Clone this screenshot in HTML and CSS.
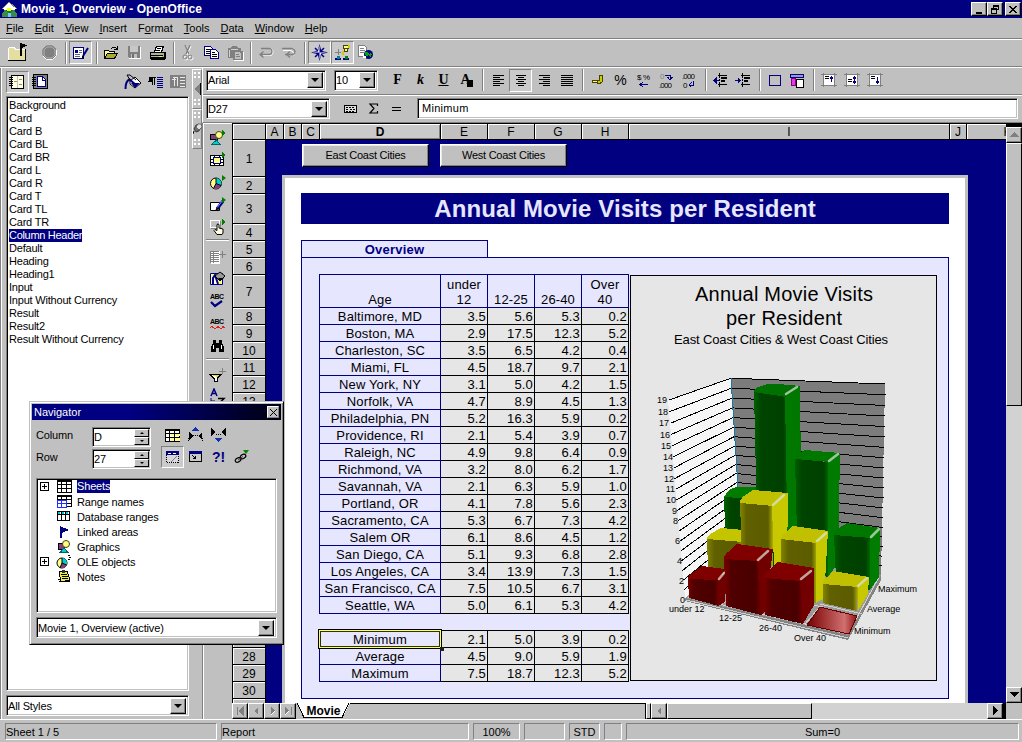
FILE: index.html
```html
<!DOCTYPE html>
<html lang="en">
<head>
<meta charset="utf-8">
<title>Movie 1, Overview - OpenOffice</title>
<link rel="stylesheet" href="styles.css">
</head>
<body>
<div class="app">
  <header class="titlebar">
    <svg class="logo" width="17" height="17" viewBox="0 0 17 17"><path d="M8 1 1 8h2v3h11V8h2z" fill="#fff"/><path d="M3 9h11v3H3z" fill="#008040"/><path d="M1 12l3-3 3 3v4H1zM9 12l3-3 4 4v3H9z" fill="#3a8a4a"/><path d="M6 7h4v3H6z" fill="#ff0"/><path d="M7 12h3v4H7z" fill="#80c0ff"/><path d="M8 1 1 8M8 1l8 7" stroke="#808080" fill="none"/></svg>
    <span class="title-text">Movie 1, Overview - OpenOffice</span>
    <div class="winbtns">
      <b class="wb"><svg width="10" height="9"><path d="M2 7h6v2H2z"/></svg></b>
      <b class="wb"><svg width="10" height="10"><path d="M3.500 1v4M3 1h6M3 2h6M8.500 1v5M7 5.500h2" stroke="#000" fill="none"/><path d="M1 4.500h6M1 5.500h6M1.500 4v5.500M6.500 4v5.500M1 9.500h6" stroke="#000" fill="none"/></svg></b>
      <b class="wb last"><svg width="10" height="9"><path d="M1.500 1l7 7M8.500 1l-7 7" stroke="#000" stroke-width="1.600"/></svg></b>
    </div>
  </header>
  <nav class="menubar">
    <span><u>F</u>ile</span><span><u>E</u>dit</span><span><u>V</u>iew</span><span><u>I</u>nsert</span><span>F<u>o</u>rmat</span><span><u>T</u>ools</span><span><u>D</u>ata</span><span><u>W</u>indow</span><span><u>H</u>elp</span>
  </nav>
  <div class="toolbar main-tools">
    <i class="cell folder"><svg width="22" height="19" viewBox="0 0 22 19"><path d="M2 6l2-2h5l1 2h9v12H2z" fill="#e4dfa0"/><path d="M2.500 17V5.500l1-1h5l1 2h9" stroke="#fff" fill="none"/><path d="M2 17.500h18M19.500 6v12" stroke="#000"/><path d="M14 0h1l6 2.500-5 2.500v8h-2z"/></svg></i>
    <i class="cell"><svg class="smooth" width="17" height="17" viewBox="0 0 17 17"><path d="M5.500 1.500h6l4 4v6l-4 4h-6l-4-4v-6z" fill="#808080" stroke="#fff"/><path d="M5.500 1.500h6l4 4M1.500 11.500v-6l4-4" fill="none" stroke="#909090"/><path d="M6 3h5l3 3v5l-3 3H6l-3-3V6z" fill="#808080" stroke="#b0b0b0"/></svg></i>
    <i class="sep"></i>
    <i class="cell on"><svg width="17" height="14" viewBox="0 0 17 14"><path d="M1.500 1.500h10v11h-10z" fill="#fff" stroke="#000080"/><path d="M3 4h3v3H3z" fill="#000080"/><path d="M7 4.500h3M7 6.500h3M3 8.500h5M3 10.500h5" stroke="#606080"/><path class="smooth" d="M16 2l-5 8" stroke="#000080" stroke-width="2"/><path d="M11 9l-1 3 3-2z"/></svg></i>
    <i class="sep"></i>
    <i class="cell"><svg width="17" height="14" viewBox="0 0 17 14"><path d="M1.500 12V4.500h4l1 1h5v3" fill="#ff9" stroke="#000"/><path d="M1.500 12.500l3-5h10l-3 5z" fill="#aa3" stroke="#000"/><path d="M8 3q3-4 6 0M14.500 0v3.500H11" stroke="#000" fill="none"/></svg></i>
    <i class="cell"><svg width="15" height="15" viewBox="0 0 15 15"><path d="M2 2h12v12H2z" fill="#fff"/><path d="M1 1h12v12H2l-1-1z" fill="#808080"/><path d="M3 1h8v6H3z" fill="#c8c8c8"/><path d="M4 9h6v4H4z" fill="#c0c0c0"/><path d="M5 9h2v4H5z" fill="#707070"/></svg></i>
    <i class="cell"><svg width="18" height="16" viewBox="0 0 18 16"><path d="M5.500 7l2-6h7l-2 6z" fill="#fff" stroke="#000"/><path d="M8 3.500h4M7 5.500h4" stroke="#000"/><path d="M1.500 7.500h14v5h-14z" fill="#b0b0a0" stroke="#000"/><path d="M2 10.500h12M2 14h14M16.500 7v7M1 13h15" stroke="#000"/><path d="M10 11.500h3" stroke="#ff0"/></svg></i>
    <i class="sep"></i>
    <i class="cell"><svg class="smooth" width="13" height="16" viewBox="0 0 13 16"><g fill="none" stroke="#fff" transform="translate(1 1)"><path d="M3 0l4 9M8 0L4 9"/><circle cx="3" cy="12" r="2"/><circle cx="8" cy="12" r="2"/></g><path d="M3 0l4 9M8 0L4 9" stroke="#808080" stroke-width="1.300"/><circle cx="3" cy="12" r="2" fill="none" stroke="#808080"/><circle cx="8" cy="12" r="2" fill="none" stroke="#808080"/></svg></i>
    <i class="cell"><svg width="17" height="15" viewBox="0 0 17 15"><path d="M1.500 1.500h6l2 2v7h-8z" fill="#fff" stroke="#000080"/><path d="M3 4.500h4M3 6.500h4M3 8.500h4" stroke="#000"/><path d="M7.500 4.500h5l3 3v6h-8z" fill="#fff" stroke="#000080"/><path d="M9 7.500h3M9 9.500h5M9 11.500h5" stroke="#000"/></svg></i>
    <i class="cell"><svg width="18" height="16" viewBox="0 0 18 16"><path d="M2 3h3l1-2h5l1 2h3v3h2v9H7v-2H2z" fill="#808080"/><path d="M5 4.500h7M3.500 5v7" stroke="#d0d0d0"/><path d="M8.500 6.500h5l2 2v6h-7z" fill="#c0c0c0" stroke="#808080"/><path d="M10 9.500h3M10 11.500h4" stroke="#808080"/><path d="M17.500 7v8.500H8" stroke="#fff" fill="none"/></svg></i>
    <i class="sep"></i>
    <i class="cell"><svg class="smooth" width="16" height="11" viewBox="0 0 16 11"><path d="M5 8.500h8q2-1 2-3.500t-2-3" stroke="#fff" fill="none"/><path d="M2 7.500h10q2-1 2-3t-2-3H3M5.500 4.500L2 7.500l3.500 3" stroke="#808080" stroke-width="1.300" fill="none"/></svg></i>
    <i class="cell"><svg class="smooth" width="16" height="11" viewBox="0 0 16 11"><path d="M2 3.500h8q3 1 3 5" stroke="#fff" fill="none"/><path d="M1 1.500h10q3 1 3 3t-2 3H4M9 4.500l-3.500 3 3.500 3" stroke="#808080" stroke-width="1.300" fill="none"/></svg></i>
    <i class="sep"></i>
    <i class="cell on"><svg class="smooth" width="17" height="17" viewBox="0 0 17 17"><path d="M4 4l9 9M13 4l-9 9" stroke="#000080" stroke-width="1.500"/><path d="M8.500 0l1.800 6.700L17 8.500l-6.700 1.800L8.500 17l-1.800-6.700L0 8.500l6.700-1.800z" fill="#000080"/><path d="M8.500 1v7.500H1l6-1zM8.500 16V8.500H16l-6 1z" fill="#fff"/></svg></i>
    <i class="cell on"><svg width="17" height="17" viewBox="0 0 17 17"><path d="M9 1h5v3H9zM10 4h3v3h-3z" fill="#ff8" stroke="#440"/><path d="M8 7h2v4H8zM14 1h2v3h-2z" fill="#cc0"/><path d="M4 5v6M1 8h6" stroke="#808080"/><path d="M1 14h6v2H1zM9 14h6v2H9z" fill="#000080"/><path d="M3 12h3v3H3z" fill="#088"/><path d="M11 12h3v3h-3z" fill="#080"/></svg></i>
    <i class="cell"><svg width="17" height="17" viewBox="0 0 17 17"><path d="M1.500 1.500h6l2 2v9h-8z" fill="#fff" stroke="#808080"/><path d="M3 4.500h4M3 6.500h5M3 8.500h4" stroke="#808080"/><circle cx="11.500" cy="10.500" r="4.500" fill="#000080"/><path d="M8 8h3l1 2-2 3-2-2zM13 9l2 1-1 3-2-1z" fill="#0a0"/><path d="M6 12h3v2H6z" fill="#fff"/></svg></i>
  </div>

  <div class="workspace">
    <aside class="stylist">
      <div class="stylist-tools">
        <i class="cell on"><svg width="17" height="16" viewBox="0 0 17 16"><path d="M2.500 1.500h12v13h-12z" fill="#ffffe8" stroke="#000"/><path d="M8.500 2v12" stroke="#c0c0c0"/><path d="M0 3.500h4M0 5.500h4M0 7.500h4M0 9.500h4M0 11.500h4" stroke="#000"/><path d="M5 7h3v1H5zM10 5h3v1h-3zM10 10h3v1h-3z" fill="#a09040"/></svg></i>
        <i class="cell"><svg width="17" height="16" viewBox="0 0 17 16"><path d="M1.500 .5h14v14h-14z" fill="#808080" stroke="#000"/><path d="M0 3.500h4M0 5.500h4M0 7.500h4M0 9.500h4M0 11.500h4" stroke="#000"/><path d="M5.500 2.500h5l3 3v7h-8z" fill="#fff" stroke="#000080"/><path d="M10.500 3v3h3" stroke="#000080" fill="none"/></svg></i>
        <i class="spring"></i>
        <i class="cell"><svg class="smooth" width="18" height="16" viewBox="0 0 18 16"><path d="M6 7l5-4 6 6-6 5-5-4z" fill="#fff" stroke="#000"/><path d="M7 9h9l-5 5z" fill="#000080"/><path d="M1.500 15q0-8 4-9.500L12 11" stroke="#000080" stroke-width="2" fill="none"/><path d="M3 1l3 0 6 5M3 1l3 5" stroke="#000" fill="none"/></svg></i>
        <i class="cell"><svg width="16" height="13" viewBox="0 0 16 13"><path d="M1 1.500h7M1 2h3v3H1zM0 5.500h4M4.500 1v8M6.500 1v8" stroke="#000" fill="#000"/><path d="M9 1.500h6M9 3.500h6M9 5.500h6M9 7.500h6M9 9.500h6M9 11.500h6" stroke="#000080"/></svg></i>
        <i class="cell"><svg width="17" height="14" viewBox="0 0 17 14"><path d="M0 0h16v13H0z" fill="#808080"/><path d="M3 2.500h5M2 4.500h4M4.500 2v9M7.500 2v9M10 2.500h5M10 5.500h5M10 8.500h5M10 11.500h5" stroke="#e8e8e8"/></svg></i>
      </div>
      <div class="stylelist sunken">
        <p>Background</p><p>Card</p><p>Card B</p><p>Card BL</p><p>Card BR</p><p>Card L</p><p>Card R</p><p>Card T</p><p>Card TL</p><p>Card TR</p><p><span class="sel">Column Header</span></p><p>Default</p><p>Heading</p><p>Heading1</p><p>Input</p><p>Input Without Currency</p><p>Result</p><p>Result2</p><p>Result Without Currency</p>
      </div>
      <div class="combo sunken styles-combo"><span>All Styles</span><b class="drop"></b></div>
    </aside>
    <div class="splitter">
      <div class="handle"><i class="dots"></i><svg width="8" height="12"><path d="M7 0v12L1 6z" fill="#808080"/><path d="M7 0v12" stroke="#000"/></svg><i class="dots"></i></div>
      <div class="handle"><i class="dots"></i><svg class="smooth" width="9" height="12" viewBox="0 0 9 12"><path d="M1 8l-1 3" stroke="#000"/><path d="M1 6l2 3 3-1 2-4-2-3-3 1z" fill="#707070" stroke="#000" stroke-width=".6"/><path d="M3 4l2-3h3l1 3-3 3z" fill="#e0e0e0" stroke="#404040" stroke-width=".6"/></svg><i class="dots"></i></div>
    </div>
    <main class="doc">
      <div class="toolbar format-tools">
        <div class="combo sunken font-combo"><span>Arial</span><b class="drop"></b></div>
        <div class="combo sunken size-combo"><span>10</span><b class="drop"></b></div>
        <i class="cell glyph">F</i><i class="cell glyph it">k</i><i class="cell glyph ul">U</i>
        <i class="cell glyph fontcol">A<b></b></i>
        <i class="sep"></i>
        <i class="cell"><svg width="12" height="11"><path d="M1 .5h11M1 2.500h7M1 4.500h11M1 6.500h7M1 8.500h11M1 10.500h7" stroke="#000"/></svg></i>
        <i class="cell on"><svg width="12" height="11"><path d="M1 .5h10M3 2.500h6M1 4.500h10M3 6.500h6M1 8.500h10M3 10.500h6" stroke="#000"/></svg></i>
        <i class="cell"><svg width="12" height="11"><path d="M1 .5h11M5 2.500h7M1 4.500h11M5 6.500h7M1 8.500h11M5 10.500h7" stroke="#000"/></svg></i>
        <i class="cell"><svg width="13" height="11"><path d="M1 .5h12M1 2.500h12M1 4.500h12M1 6.500h12M1 8.500h12M1 10.500h12" stroke="#000"/></svg></i>
        <i class="sep"></i>
        <i class="cell"><svg width="14" height="12" viewBox="0 0 14 12"><path d="M8.500 1.500h3v6l-2 1.500h-3V6.500h2z" fill="#cc0" stroke="#440"/><path d="M1.500 6.500h5v2h-5z" fill="#ff6" stroke="#440"/></svg></i>
        <i class="cell pct">%</i>
        <i class="cell mini"><svg width="16" height="14" viewBox="0 0 16 14"><text x="1" y="7">$</text><text x="7" y="7">%</text><path d="M4 11.500h8M7 9l-3 2.500L7 14" stroke="#000080" fill="none"/></svg></i>
        <i class="cell mini"><svg width="18" height="15" viewBox="0 0 18 15"><text x="2" y="6" fill="#808080">0</text><text x="1" y="15" textLength="13">.000</text><path d="M7 2.500h5v4M9.500 4l2.500 3 2.500-3" stroke="#000080" fill="none"/></svg></i>
        <i class="cell mini"><svg width="18" height="15" viewBox="0 0 18 15"><text x="1" y="6" textLength="13">.000</text><text x="2" y="15">0</text><path d="M12.500 8v4H8M10.500 9.500L8 12l2.500 2.500" stroke="#000080" fill="none"/></svg></i>
        <i class="sep"></i>
        <i class="cell"><svg width="17" height="15" viewBox="0 0 17 15"><path d="M7.500 0v15" stroke="#000" stroke-dasharray="2 1"/><path d="M6 2.500h9M9 5h6M9 8h4M6 11.500h9" stroke="#000" stroke-width="1.500"/><path d="M1 7.500h6M4 5L1.500 7.500 4 10z" fill="#000080" stroke="#000080"/></svg></i>
        <i class="cell"><svg width="17" height="15" viewBox="0 0 17 15"><path d="M7.500 0v15" stroke="#000" stroke-dasharray="2 1"/><path d="M6 2.500h9M9 5h6M9 8h4M6 11.500h9" stroke="#000" stroke-width="1.500"/><path d="M0 7.500h6M3 5l2.500 2.500L3 10z" fill="#000080" stroke="#000080"/></svg></i>
        <i class="sep"></i>
        <i class="cell"><svg width="14" height="13"><path d="M1.500 1.500h11v10h-11z" fill="none" stroke="#000080" stroke-width="1.200"/></svg></i>
        <i class="cell"><svg width="15" height="15" viewBox="0 0 15 15"><path d="M.5 1.500h13v3H.5z" fill="#99c" stroke="#000080"/><path d="M1 5h4v7H1z" fill="#e040e0" stroke="#808"/><path d="M6.500 6.500h7v8h-7z" fill="#fff" stroke="#000"/></svg></i>
        <i class="sep"></i>
        <i class="cell"><svg width="16" height="14" viewBox="0 0 16 14"><path d="M2 1h12v12H2z" fill="#fff"/><path d="M2.500 0v14M13.500 0v14M0 1.500h16M0 12.500h16" stroke="#808080"/><path d="M4 3.500h4M4 5.500h4" stroke="#000"/><path d="M10.500 3v6M9 5.500l1.500-2 1.500 2" stroke="#000080" fill="none"/></svg></i>
        <i class="cell"><svg width="16" height="14" viewBox="0 0 16 14"><path d="M2 1h12v12H2z" fill="#fff"/><path d="M2.500 0v14M13.500 0v14M0 1.500h16M0 12.500h16" stroke="#808080"/><path d="M4 6.500h4M4 8.500h4" stroke="#000"/><path d="M10.500 3v8M9 5.500l1.500-2 1.500 2M9 8.500l1.500 2 1.500-2" stroke="#000080" fill="none"/></svg></i>
        <i class="cell"><svg width="16" height="14" viewBox="0 0 16 14"><path d="M2 1h12v12H2z" fill="#fff"/><path d="M2.500 0v14M13.500 0v14M0 1.500h16M0 12.500h16" stroke="#808080"/><path d="M4 3.500h4M4 5.500h4" stroke="#000"/><path d="M10.500 4v7M9 8.500l1.500 2 1.500-2" stroke="#000080" fill="none"/></svg></i>
      </div>
      <div class="formula-bar">
        <div class="combo sunken name-combo"><span>D27</span><b class="drop"></b></div>
        <i class="cell"><svg width="15" height="10"><path d="M1.500 1.500h12v7h-12z" fill="#ddd" stroke="#000" stroke-width="1.500"/><path d="M3 3.500h9M3 5.500h3M7 5.500h2M10 5.500h2M3 7.500h9" stroke="#000" stroke-dasharray="2 1"/></svg></i>
        <i class="cell"><svg class="smooth" width="11" height="11"><path d="M9.500 3V1H2l4 4.500L2 10h7.500V8" fill="none" stroke="#000" stroke-width="1.200"/></svg></i>
        <i class="cell"><svg width="10" height="6"><path d="M0 1.500h9M0 4.500h9" stroke="#000"/></svg></i>
        <div class="formula-input sunken">Minimum</div>
      </div>
      <div class="editor">
        <div class="toolbox">
          <i><svg width="18" height="16" viewBox="0 0 18 16"><path d="M1.500 4.500h7v5h-7z" fill="#804080" stroke="#000"/><circle cx="10" cy="5" r="3.500" fill="#ff8" stroke="#440"/><path d="M7.500 10l4 4.500h-9z" fill="#0cc" stroke="#066"/><path d="M13 0l4 3-4 3z" fill="#008000"/></svg></i>
          <i><svg width="18" height="16" viewBox="0 0 18 16"><path d="M1.500 3.500h13v10h-13z" fill="#fff" stroke="#000"/><path d="M1 7.500h14M1 10.500h14M5.500 3v11M10.500 3v11" stroke="#000"/><path d="M4.500 5.500h7v6h-7z" fill="#ff8" stroke="#000080"/><path d="M13 0l4 3-4 3z" fill="#008000"/></svg></i>
          <i><svg class="smooth" width="18" height="16" viewBox="0 0 18 16"><circle cx="7" cy="8.500" r="5.500" fill="#ff8" stroke="#000"/><path d="M7 8.500V3a5.500 5.500 0 0 1 5 7.500z" fill="#0cc"/><path d="M7 8.500l5 2a5.500 5.500 0 0 1-7.500 3z" fill="#804080"/><path d="M7 3v5.500l5 2M7 8.500l-2.500 5" stroke="#000" fill="none"/><path d="M13 0l4 3-4 3z" fill="#008000"/></svg></i>
          <i><svg class="smooth" width="18" height="16" viewBox="0 0 18 16"><path d="M1.500 5.500h9v8h-9z" fill="#fff" stroke="#000"/><path d="M14 4L8 12" stroke="#000080" stroke-width="3"/><path d="M13 4l-5 7" stroke="#88f"/><path d="M8 10l-2 4 4-2z"/><path d="M13 0l4 3-4 3z" fill="#008000"/></svg></i>
          <i><svg width="18" height="17" viewBox="0 0 18 17"><path d="M1.500 1.500h9v7h-9z" fill="#c0c0c0" stroke="#fff"/><path d="M2 9.500h9V2" stroke="#808080" fill="none"/><path class="smooth" d="M8 15.500l-3-4 1-1 2 1V5.500q1-1 2 0V9l4 1v4l-1 1.500z" fill="#ffffe0" stroke="#000"/><path d="M13 0l4 3-4 3z" fill="#008000"/></svg></i>
          <hr>
          <i><svg width="18" height="16" viewBox="0 0 18 16"><path d="M2 2h9v13H2z" fill="#fff"/><path d="M1 2.500h9M1 4.500h9M1 6.500h9M1 8.500h9M1 10.500h9M1 12.500h9M1.500 2v12M4.500 2v12" stroke="#808080"/><path d="M13.500 2v7M10 5.500h7" stroke="#808080"/></svg></i>
          <i><svg class="smooth" width="18" height="16" viewBox="0 0 18 16"><path d="M1.500 2.500h12v11h-12z" fill="#ff8" stroke="#000080"/><path d="M4 13V7l2-3 3 9" stroke="#000080" stroke-width="2" fill="#fff"/><path d="M6 5l5-4 5 4-5 5z" fill="#999" stroke="#000"/><path d="M9 7h6l-4 3z"/></svg></i>
          <i class="abc"><svg class="smooth" width="18" height="16" viewBox="0 0 18 16"><text x="1" y="6" textLength="14">ABC</text><path d="M2 9l4 4 7-5" stroke="#000080" stroke-width="2.200" fill="none"/></svg></i>
          <i class="abc"><svg width="18" height="14" viewBox="0 0 18 14"><text x="1" y="7" textLength="14">ABC</text><path d="M1 11l2-1.500L6 12l3-2.500L12 12l2-2.500 2 1.500" stroke="#e02020" fill="none"/></svg></i>
          <i><svg width="16" height="14" viewBox="0 0 16 14"><path d="M3 1h3v3h3V1h3v3l2 4v5H9V9H6v4H1V8l2-4z"/><path d="M3.500 6v4M11.500 6v4" stroke="#fff"/></svg></i>
          <hr>
          <i><svg width="18" height="15" viewBox="0 0 18 15"><path d="M1 6.500h11l-4 4v3H5v-3z" fill="#fff" stroke="#000"/><path d="M3 7h7l-2 2z" fill="#dd4"/><path d="M13.500 0v6M10 3.500h7" stroke="#808080"/></svg></i>
          <i><svg class="smooth" width="18" height="18" viewBox="0 0 18 18"><path d="M2 8l3-7 3 7M3 5.500h4" stroke="#000080" stroke-width="1.500" fill="none"/><path d="M9 10.500h6l-5 5h6" stroke="#000" fill="none" stroke-width="1.500"/><path d="M2 10v3h4" stroke="#000080" fill="none"/></svg></i>
        </div>
        <div class="sheet">
          <div class="colheads"><b class="c0"></b><b class="cA">A</b><b class="cB">B</b><b class="cB">C</b><b class="cD">D</b><b class="cN">E</b><b class="cN">F</b><b class="cN">G</b><b class="cN">H</b><b class="cI">I</b><b class="cJ">J</b><b class="cK">K</b></div>
          <div class="sheetbody">
            <div class="rowheads"><b class="r1">1</b><b>2</b><b class="r3">3</b><b>4</b><b>5</b><b>6</b><b class="r7">7</b><b>8</b><b>9</b><b>10</b><b>11</b><b>12</b><b>13</b><b>14</b><b>15</b><b>16</b><b>17</b><b>18</b><b>19</b><b>20</b><b>21</b><b>22</b><b>23</b><b>24</b><b>25</b><b>26</b><b>27</b><b>28</b><b>29</b><b>30</b><b></b></div>
            <div class="canvas">
              <div class="citybtns"><button>East Coast Cities</button><button>West Coast Cities</button></div>
              <section class="page">
                <h1>Annual Movie Visits per Resident</h1>
                <h2>Overview</h2>
                <div class="card">
                  <div class="tables">
                    <div class="grid">
                      <b class="h">Age</b><b class="h">under<br>12</b><b class="h">12-25</b><b class="h">26-40</b><b class="h">Over<br>40</b>
                      <b>Baltimore, MD</b><i>3.5</i><i>5.6</i><i>5.3</i><i>0.2</i>
                      <b>Boston, MA</b><i>2.9</i><i>17.5</i><i>12.3</i><i>5.2</i>
                      <b>Charleston, SC</b><i>3.5</i><i>6.5</i><i>4.2</i><i>0.4</i>
                      <b>Miami, FL</b><i>4.5</i><i>18.7</i><i>9.7</i><i>2.1</i>
                      <b>New York, NY</b><i>3.1</i><i>5.0</i><i>4.2</i><i>1.5</i>
                      <b>Norfolk, VA</b><i>4.7</i><i>8.9</i><i>4.5</i><i>1.3</i>
                      <b>Philadelphia, PN</b><i>5.2</i><i>16.3</i><i>5.9</i><i>0.2</i>
                      <b>Providence, RI</b><i>2.1</i><i>5.4</i><i>3.9</i><i>0.7</i>
                      <b>Raleigh, NC</b><i>4.9</i><i>9.8</i><i>6.4</i><i>0.9</i>
                      <b>Richmond, VA</b><i>3.2</i><i>8.0</i><i>6.2</i><i>1.7</i>
                      <b>Savannah, VA</b><i>2.1</i><i>6.3</i><i>5.9</i><i>1.0</i>
                      <b>Portland, OR</b><i>4.1</i><i>7.8</i><i>5.6</i><i>2.3</i>
                      <b>Sacramento, CA</b><i>5.3</i><i>6.7</i><i>7.3</i><i>4.2</i>
                      <b>Salem OR</b><i>6.1</i><i>8.6</i><i>4.5</i><i>1.2</i>
                      <b>San Diego, CA</b><i>5.1</i><i>9.3</i><i>6.8</i><i>2.8</i>
                      <b>Los Angeles, CA</b><i>3.4</i><i>13.9</i><i>7.3</i><i>1.5</i>
                      <b>San Francisco, CA</b><i>7.5</i><i>10.5</i><i>6.7</i><i>3.1</i>
                      <b>Seattle, WA</b><i>5.0</i><i>6.1</i><i>5.3</i><i>4.2</i>
                    </div>
                    <div class="grid summary">
                      <b>Minimum<span class="cursor"></span></b><i>2.1</i><i>5.0</i><i>3.9</i><i>0.2</i>
                      <b>Average</b><i>4.5</i><i>9.0</i><i>5.9</i><i>1.9</i>
                      <b>Maximum</b><i>7.5</i><i>18.7</i><i>12.3</i><i>5.2</i>
                    </div>
                  </div>
                  <div class="chart">
                    <svg width="305" height="404" viewBox="631 276 305 404">
                      <defs>
                        <linearGradient id="flat" x1="0" y1="0" x2="1" y2="0"><stop offset="0" stop-color="#700"/><stop offset=".75" stop-color="#d07070"/><stop offset="1" stop-color="#901010"/></linearGradient>
                        <linearGradient id="gf" x1="0" y1="0" x2="1" y2="0"><stop offset="0" stop-color="#006000"/><stop offset=".2" stop-color="#004400"/><stop offset=".85" stop-color="#004000"/><stop offset="1" stop-color="#007000"/></linearGradient>
                        <linearGradient id="yf" x1="0" y1="0" x2="1" y2="0"><stop offset="0" stop-color="#848400"/><stop offset=".2" stop-color="#606000"/><stop offset=".85" stop-color="#5c5c00"/><stop offset="1" stop-color="#b0b000"/></linearGradient>
                        <linearGradient id="rf" x1="0" y1="0" x2="1" y2="0"><stop offset="0" stop-color="#780000"/><stop offset=".2" stop-color="#500000"/><stop offset=".85" stop-color="#4a0000"/><stop offset="1" stop-color="#700000"/></linearGradient>
                      </defs>
                      <text class="ct" x="695" y="301" textLength="178">Annual Movie Visits</text>
                      <text class="ct" x="726" y="325" textLength="116">per Resident</text>
                      <text class="cs" x="674" y="344" textLength="214">East Coast Cities &amp; West Coast Cities</text>
                      <path d="M668 400L731 378 742 550 685 598z" fill="#f6f6f6"/>
                      <path d="M731 378l154 6-4 191-139-25z" fill="#7c7c7c"/>
                      <g class="gridlines">
                        <path d="M669 400L731 378.200 885 384"/><path d="M669.500 411.700L731.500 388.200 886 394.800"/><path d="M670.500 423.200L732 398.100 885 405.500"/><path d="M671 434.500L732.500 407.900 885 416"/><path d="M672 445.800L733 417.600 885 426.600"/><path d="M673 456.900L733.600 427.200 884.500 437"/><path d="M674 467.900L734 436.700 884.500 447.400"/><path d="M674.500 478.700L734.600 446.100 884 457.700"/><path d="M675.500 489.400L735 455.300 884 467.900"/><path d="M676.500 500L735.700 464.500 884 478"/><path d="M677 510.500L736 473.500 883.500 488"/><path d="M678 520.800L736.800 482.500 883.500 498"/><path d="M679 531.100L737 491.300 883 507.900"/><path d="M680 541.100L738 500 883 517.700"/><path d="M680.600 551.100L738.400 508.600 883 527.500"/><path d="M681.500 560.900L739 517.100 882.500 537.100"/><path d="M682.400 570.600L739.400 525.500 882.500 546.700"/><path d="M683.300 580.200L740 533.800 882 556.200"/><path d="M684 589.700L740.500 541.900 882 565.700"/>
                      </g>
                      <path d="M731 378l11 172" stroke="#1878a0"/>
                      <path d="M685 598L742 550l139 25-33 62z" fill="#9a9a9a"/>
                      <path d="M685 598l163 37 33-60v5l-33 60-163-39z" fill="#848484"/>
                      <path d="M686 600l162 38M688 597l160 37 31-57M724 603l11-10M762 614l10-9M805 624l14-16M820 604l42 10M781 598l42 9" stroke="#d0d0d0" fill="none"/>
                      <g>
                        <path d="M724 497l5-7 7-3h21v75l-31-5z" fill="url(#gf)"/><path d="M724 497l5-7 7-3h21v12z" fill="#007c00"/>
                        <path d="M754 392l32 2 3 176-31-8z" fill="url(#gf)"/><path d="M785 394l15-8 1 90-1 94-12-2z" fill="#007800"/><path d="M753.500 392q1-4 5-5l9-3q16 0 33 2l-7 6-7 5z" fill="#007000"/><path class="shine" d="M786 394l11-7"/>
                        <path d="M795 459l34 3-1 115-30-8z" fill="url(#gf)"/><path d="M828 461l12-8-2 110-10 14z" fill="#007a00"/><path d="M795 459q1-4 4-6l6-3 35 3-10 9z" fill="#007800"/><path class="shine" d="M829 461l9-7"/>
                        <path d="M834 535l37 3-1 52-34-11z" fill="url(#gf)"/><path d="M870 537l10-9-1 49-9 13z" fill="#007c00"/><path d="M834 535q1-5 5-7l8-5 33 5-9 10z" fill="#007800"/><path class="shine" d="M871 537l8-8"/>
                      </g>
                      <g>
                        <path d="M707 539l36 2v35l-35-6z" fill="url(#yf)"/><path d="M707 539q0-3 5-6l9-5 22 2v12z" fill="#c4c400"/>
                        <path d="M740 503l33 3v60l-31-6z" fill="url(#yf)"/><path d="M772 505l16-12-1 70-13 4z" fill="#c8c800"/><path d="M740 503q0-4 4-7l9-6 35 3-14 13z" fill="#c0c000"/><path class="shine" d="M773 505l11-10"/>
                        <path d="M781 539l36 3-1 61-34-8z" fill="url(#yf)"/><path d="M816 542l12-11-4 67-8 5z" fill="#c8c800"/><path d="M781 539q0-4 4-6l8-7 35 5-12 12z" fill="#c0c000"/><path class="shine" d="M817 541l9-8"/>
                        <path d="M823 584l35 3-1 24-34-8z" fill="url(#yf)"/><path d="M858 586l11-9-1 17-10 17z" fill="#c8c800"/><path d="M823 584q0-4 3-6l7-7 36 6-10 10z" fill="#c0c000"/><path class="shine" d="M858 586l9-8"/>
                      </g>
                      <g>
                        <path d="M688 579l31 1v26l-30-8z" fill="url(#rf)"/><path d="M718 580l7-8v30l-7 4z" fill="#700000"/><path d="M688 579q0-4 4-6l10-7 23 3-5 11z" fill="#800000"/><path class="shine" d="M719 579l5-6"/>
                        <path d="M724 559l34 2 3 54-35-9z" fill="url(#rf)"/><path d="M757 560l16-11-8 62-4 4z" fill="#700000"/><path d="M724 559q0-4 4-7l9-8 36 5-15 12z" fill="#800000"/><path class="shine" d="M758 560l10-9"/>
                        <path d="M764 578l37 2 2 44-38-9z" fill="url(#rf)"/><path d="M800 580l14-12v37l-11 19z" fill="#720000"/><path d="M764 578q0-4 4-7l10-9 36 6-13 13z" fill="#800000"/><path class="shine" d="M801 579l10-8"/>
                        <path d="M807 625l13-18 37 9-8 18z" fill="url(#flat)" stroke="#600"/>
                      </g>
                      <g class="ax" text-anchor="end">
                        <text x="667" y="403">19</text><text x="668" y="415">18</text><text x="669" y="426">17</text><text x="670" y="438">16</text><text x="671" y="449">15</text><text x="673" y="460">14</text><text x="673" y="471">13</text><text x="674" y="482">12</text><text x="675" y="492">11</text><text x="676" y="503">10</text><text x="677" y="514">9</text><text x="678" y="524">8</text><text x="680" y="544">6</text><text x="682" y="564">4</text><text x="684" y="584">2</text><text x="685" y="603">0</text>
                      </g>
                      <g class="ax">
                        <text x="669" y="612">under 12</text><text x="719" y="621">12-25</text><text x="759" y="631">26-40</text><text x="794" y="641">Over 40</text><text x="878" y="592">Maximum</text><text x="867" y="612">Average</text><text x="854" y="634">Minimum</text>
                      </g>
                    </svg>
                  </div>
                </div>
              </section>
            </div>
          </div>
          <div class="tabrow">
            <b class="nb"><svg width="9" height="10"><path d="M1.500 1v8M7 1v8L3 5z" fill="#808080" stroke="#808080"/></svg></b><b class="nb"><svg width="9" height="10"><path d="M6 1v8L2 5z" fill="#808080"/></svg></b><b class="nb"><svg width="9" height="10"><path d="M3 1v8l4-4z" fill="#808080"/><path d="M3 9l4-4" stroke="#fff"/></svg></b><b class="nb"><svg width="9" height="10"><path d="M1 1v8l4-4zM7 1h1v8H7z" fill="#808080"/><path d="M1 9l4-4" stroke="#fff"/></svg></b>
            <div class="tab"><svg width="54" height="15"><path d="M0 0h53l-7 14.500H7z" fill="#fff"/><path d="M0 0l7 14.500h38L52 0" fill="none" stroke="#000"/></svg><span>Movie</span></div>
            <div class="tabline"></div>
            <b class="split"></b>
            <b class="nb"><svg width="9" height="10"><path d="M6 1v8L2 5z" fill="#808080"/></svg></b>
            <div class="hthumb"></div><div class="htrack"></div>
            <b class="nb"><svg width="9" height="10"><path d="M2 0v9l5-4.500z"/></svg></b><b class="endcap"></b>
          </div>
        </div>
        <div class="vscroll"><b class="vb"><svg width="9" height="6"><path d="M0 5h9L4.500 0z" fill="#808080"/></svg></b><div class="vthumb"></div><div class="vtrack"></div><b class="vb"><svg width="9" height="6"><path d="M0 0h9L4.500 5z"/></svg></b><div class="corner"></div></div>
      </div>
    </main>
  </div>
  <footer class="status"><span class="s1">Sheet 1 / 5</span><span class="s2">Report</span><span class="s3">100%</span><span class="s4"></span><span class="s5">STD</span><span class="s6"></span><span class="s7">Sum=0</span></footer>

  <div class="navigator">
    <div class="nav-title"><span>Navigator</span><b><svg width="9" height="9"><path d="M1 1l7 7M8 1L1 8" stroke="#000"/></svg></b></div>
    <div class="nav-tools">
      <div class="nav-fields">
        <label>Column</label><div class="spin sunken"><span>D</span><b class="ud"><i></i><i class="down"></i></b></div>
        <label>Row</label><div class="spin sunken"><span>27</span><b class="ud"><i></i><i class="down"></i></b></div>
      </div>
      <div class="nav-icons">
        <i class="cell"><svg width="16" height="13"><path d="M.5 .5h14v12H.5z" fill="#fff" stroke="#000"/><path d="M6 5h9v2H6zM6 9h9v3H6z" fill="#ff8"/><path d="M0 1.500h15M0 4.500h15M0 8.500h15M4.500 0v13M9.500 0v13" stroke="#000"/></svg></i>
        <i class="cell"><svg width="17" height="16" viewBox="0 0 17 16"><path d="M5 4h7L8.500 0z" fill="#1030b0"/><path d="M2 5l4 4-4 4zM15 5l-4 4 4 4z"/><path d="M1.500 11v4M15.500 11v4M6 8h5" stroke="#000" stroke-dasharray="1 1"/></svg></i>
        <i class="cell"><svg width="17" height="16" viewBox="0 0 17 16"><path d="M5 11h7l-3.500 4z" fill="#1030b0"/><path d="M1 1l5 4-5 4zM16 1l-5 4 5 4z"/><path d="M6 7h5" stroke="#000" stroke-dasharray="1 1"/></svg></i>
        <i></i>
        <i class="cell on"><svg width="14" height="13"><path d="M.5 .5h12v11H.5z" fill="#d8d8d8" stroke="#000" stroke-dasharray="1 1"/><path d="M0 0h13v4H0z" fill="#000080"/><path d="M2 2h3M7 2h3" stroke="#fff"/><path d="M5 11l6-6" stroke="#808080"/></svg></i>
        <i class="cell"><svg width="14" height="13"><path d="M.5 .5h12v10H.5z" fill="#c8c8c8" stroke="#000"/><path d="M0 0h13v3H0z" fill="#000080"/><path d="M3 4l3 3M6.500 5v2.500H4" stroke="#000" fill="none"/></svg></i>
        <i class="cell what">?!</i>
        <i class="cell"><svg class="smooth" width="16" height="15"><ellipse cx="4" cy="10" rx="3" ry="2" transform="rotate(-30 4 10)" fill="none" stroke="#000" stroke-width="1.200"/><ellipse cx="9" cy="6.500" rx="3" ry="2" transform="rotate(-30 9 6.500)" fill="none" stroke="#000" stroke-width="1.200"/><path d="M4 10l5-3.500" stroke="#404040"/><path d="M9 0h6l-3 4z" fill="#080"/></svg></i>
      </div>
    </div>
    <div class="tree sunken">
      <div class="node"><b class="plus"></b><i><svg width="15" height="13"><path d="M.5 .5h14v12H.5zM0 1.500h15M0 4.500h15M0 8.500h15M4.500 0v13M9.500 0v13" fill="#fff" stroke="#000"/></svg></i><span class="sel">Sheets</span></div>
      <div class="node"><b></b><i><svg width="15" height="13"><path d="M.5 .5h14v11H.5zM0 1.500h15M0 4.500h15M4.500 0v5M9.500 0v13M10 8.500h5" fill="#fff" stroke="#000"/><path d="M.7 5.700h9v7H.7zM1 8.500h9M4.500 6v6" fill="#fff" stroke="#2030ff"/></svg></i><span>Range names</span></div>
      <div class="node"><b></b><i><svg width="14" height="11"><path d="M.5 .5h12v9H.5zM4.500 0v10M8.500 0v10M0 3.500h13" fill="#fff" stroke="#000"/><path d="M1 2h11" stroke="#0cc" stroke-width="2" stroke-dasharray="2 2"/></svg></i><span>Database ranges</span></div>
      <div class="node"><b></b><i><svg width="10" height="12"><path d="M1 0l9 4-7 3v5H1z" fill="#000080"/></svg></i><span>Linked areas</span></div>
      <div class="node"><b></b><i><svg width="14" height="13"><path d="M1 3h6v6H1z" fill="#804080" stroke="#000"/><circle cx="9" cy="4" r="3.500" fill="#ff8" stroke="#440"/><path d="M7 8l4 4.500H3z" fill="#0cc" stroke="#066"/></svg></i><span>Graphics</span></div>
      <div class="node"><b class="plus"></b><i><svg class="smooth" width="16" height="14"><circle cx="6" cy="8" r="5" fill="#ff8" stroke="#000"/><path d="M6 8V3a5 5 0 0 1 4.500 7z" fill="#0cc"/><path d="M6 8l4.500 2A5 5 0 0 1 4 13z" fill="#804080"/><path d="M6 3v5l4.500 2M6 8l-2 5" stroke="#000" fill="none"/><path d="M12 .5h2M13 2.500h2M12 4.500h2" stroke="#000"/></svg></i><span>OLE objects</span></div>
      <div class="node"><b></b><i><svg width="14" height="13"><path d="M2 2l8-1 3 9-9 2z" fill="#ee4" stroke="#000"/><path d="M4 4h6M5 6h6M5 8h6M2 11.500h11M1 9.500h3" stroke="#000"/><path d="M5 0h3v3H5z" fill="#333"/></svg></i><span>Notes</span></div>
    </div>
    <div class="combo sunken nav-combo"><span>Movie 1, Overview (active)</span><b class="drop"></b></div>
  </div>
</div>
</body>
</html>
```
FILE: styles.css
```css
* { box-sizing: border-box; }
html, body { margin: 0; padding: 0; }
body { width: 1022px; height: 742px; overflow: hidden; background: #c0c0c0; font: 11px "Liberation Sans", Arial, sans-serif; color: #000; }
p, h1, h2 { margin: 0; font-weight: normal; }
i { font-style: normal; }
b { font-weight: normal; }
svg { display: block; shape-rendering: crispEdges; flex: none; }
svg circle { shape-rendering: auto; }
.smooth { shape-rendering: auto; }
.app { position: relative; width: 1022px; height: 742px; display: flex; flex-direction: column; }

/* Title and menu */
.titlebar { height: 18px; background: #000080; color: #fff; display: flex; align-items: center; padding-left: 1px; }
.title-text { font-weight: bold; font-size: 12px; letter-spacing: .05px; margin-left: 3px; flex: 1; }
.winbtns { display: flex; padding-right: 1px; }
.wb { width: 16px; height: 14px; background: #c0c0c0; border: 1px solid; border-color: #fff #000 #000 #fff; box-shadow: inset -1px -1px #808080; display: flex; align-items: center; justify-content: center; }
.wb.last { margin-left: 2px; }
.menubar { height: 22px; display: flex; align-items: center; gap: 11px; padding: 0 6px 2px; border-bottom: 1px solid #fff; box-shadow: inset 0 -1px #808080; }

/* Toolbars */
.toolbar { display: flex; align-items: center; border-bottom: 1px solid #fff; box-shadow: inset 0 -1px #808080; }
.main-tools { height: 28px; padding: 0 0 2px 5px; }
.cell { width: 23px; height: 23px; flex: none; display: flex; align-items: center; justify-content: center; border: 1px solid transparent; }
.cell.on { border-color: #808080 #fff #fff #808080; background: #cacaca; }
.cell.folder { width: 24px; margin-right: 9px; }
.sep { width: 2px; height: 22px; margin: 0 2px 0 4px; border-left: 1px solid #808080; border-right: 1px solid #fff; flex: none; }
.sunken { background: #fff; border: 1px solid; border-color: #808080 #fff #fff #808080; box-shadow: inset 1px 1px #000, inset -1px -1px #c0c0c0; }
.combo { display: flex; align-items: center; padding: 2px 2px 2px 1px; height: 21px; flex: none; letter-spacing: -.15px; }
.combo span { flex: 1; white-space: nowrap; }
.drop { width: 16px; height: 16px; background: #c0c0c0; border: 1px solid; border-color: #fff #000 #000 #fff; box-shadow: inset -1px -1px #808080; display: flex; align-items: center; justify-content: center; }
.drop::before { content: ""; border: 4px solid transparent; border-top-color: #000; border-bottom: 0; }

.workspace { display: flex; height: 651px; }
.stylist { width: 192px; border-left: 1px solid #808080; box-shadow: inset 1px 0 #fff; padding: 3px 0 0 5px; }
.stylist-tools { display: flex; width: 183px; height: 25px; }
.stylist-tools .cell { height: 22px; }
.spring { flex: 1; }
.stylist-tools .cell:last-child { margin-right: -1px; }
.stylelist { width: 183px; height: 595px; padding: 2px 0 0 1px; letter-spacing: -.2px; }
.stylelist p { height: 13px; line-height: 13px; padding-left: 1px; }
.sel { background: #000080; color: #fff; display: inline-block; height: 13px; }
.stylelist .sel { letter-spacing: -.3px; }
.styles-combo { width: 183px; margin-top: 4px; }
.splitter { width: 10px; padding-top: 1px; }
.handle { height: 40px; border: 1px solid; border-color: #fff #808080 #808080 #fff; display: flex; flex-direction: column; align-items: center; justify-content: space-between; padding: 2px 0; }
.dots { width: 7px; height: 7px; background: radial-gradient(circle at 1px 1px, #fff 1px, transparent 1px) 0 0 / 4px 4px; }

.doc { width: 820px; display: flex; flex-direction: column; }
.format-tools { height: 28px; border-left: 1px solid #fff; padding: 0 0 3px 3px; }
.font-combo { width: 120px; margin-right: 8px; }
.size-combo { width: 44px; margin-right: 8px; }
.glyph { font: bold 14px "Liberation Serif", serif; }
.it { font-style: italic; }
.ul { text-decoration: underline; }
.fontcol b { width: 6px; height: 7px; background: #000; margin: 7px 0 0 -4px; }
.pct { font-size: 14px; }
.mini text { font: 8px "Liberation Sans", sans-serif; }
.abc text { font: bold 7px "Liberation Sans", sans-serif; }
.formula-bar { height: 27px; display: flex; align-items: center; padding: 0 4px 1px 3px; border-left: 1px solid #fff; border-bottom: 1px solid #808080; }
.name-combo { width: 124px; margin-right: 9px; }
.formula-input { flex: 1; height: 21px; margin-left: 9px; padding: 0 4px; line-height: 19px; letter-spacing: .3px; }

/* Sheet */
.editor { display: flex; height: 596px; }
.toolbox { width: 30px; border-left: 1px solid #808080; box-shadow: inset 1px 1px #fff; padding-top: 4px; display: flex; flex-direction: column; align-items: center; overflow: hidden; }
.toolbox i { height: 22.300px; width: 22px; flex: none; display: flex; align-items: center; justify-content: center; }
.toolbox hr { width: 23px; height: 2px; margin: 1px 0 4px; border: 0; border-top: 1px solid #808080; border-bottom: 1px solid #fff; flex: none; }
.sheet { width: 774px; display: flex; flex-direction: column; }
.colheads { height: 17px; display: flex; border-top: 1px solid #000; border-left: 1px solid #000; overflow: hidden; }
.colheads b, .rowheads b { border-right: 1px solid #000; border-bottom: 1px solid #000; box-shadow: inset 1px 1px #fff; display: flex; align-items: center; justify-content: center; flex: none; }
.colheads b { font-size: 12px; padding-top: 1px; }
.colheads b.c0 { width: 33px; }
.colheads b.cA { width: 18px; }
.colheads b.cB { width: 18px; }
.colheads b.cD { width: 121px; font-weight: bold; box-shadow: inset 1px 1px #fff, inset -1px -1px #808080; background: #cacaca; }
.colheads b.cN { width: 47px; }
.colheads b.cI { width: 321px; }
.colheads b.cJ { width: 17px; }
.colheads b.cK { width: 82px; }
.sheetbody { height: 563px; display: flex; overflow: hidden; }
.rowheads { width: 34px; border-left: 1px solid #000; font-size: 12px; }
.rowheads b { height: 17px; padding-top: 1px; }
.rowheads b.r1 { height: 37px; }
.rowheads b.r3 { height: 30px; }
.rowheads b.r7 { height: 33px; }
.canvas { width: 740px; background: #000080; padding: 4px 0 0 16px; }
.citybtns { display: flex; gap: 11px; padding-left: 20px; height: 31px; }
.citybtns button { width: 127px; height: 23px; padding: 0 0 2px; font: inherit; letter-spacing: -.25px; color: #000; background: #c0c0c0; border: 1px solid; border-color: #fff #000 #000 #fff; box-shadow: inset -1px -1px #808080, inset 1px 1px #e8e8e8; }
.page { width: 686px; height: 532px; background: #fff; border: 3px solid #c0c0c0; border-bottom: 0; padding: 15px 0 0 16px; }
.page h1 { width: 648px; height: 31px; line-height: 32px; background: #000080; color: #e6e6ff; font-size: 24px; font-weight: bold; letter-spacing: .1px; text-align: center; }
.page h2 { width: 187px; height: 17px; line-height: 18px; margin-top: 16px; border: 1px solid #000080; border-bottom: 0; background: #e6e6ff; color: #000080; font-size: 13px; font-weight: bold; letter-spacing: .2px; text-align: center; }
.card { width: 648px; height: 442px; border: 1px solid #000080; background: #e6e6ff; padding: 16px 0 0 17px; display: flex; }
.tables { width: 310px; }
.grid { display: grid; grid-template-columns: 121px repeat(4, 47px); grid-template-rows: 33px; grid-auto-rows: 17px; border-top: 1px solid #000080; border-left: 1px solid #000080; font-size: 13px; line-height: 17px; letter-spacing: .15px; }
.grid b { position: relative; border-right: 1px solid #000080; border-bottom: 1px solid #000080; text-align: center; white-space: nowrap; }
.grid b.h { display: flex; align-items: flex-end; justify-content: center; line-height: 15px; }
.grid i { background: #e6e6e6; border-right: 1px solid #000; border-bottom: 1px solid #000; text-align: right; padding-right: 1px; }
.summary { margin-top: 16px; grid-template-rows: 17px; }
.summary > i:nth-child(-n+5) { box-shadow: 0 -1px #000; }
.cursor { position: absolute; left: -2px; top: -2px; width: 124px; height: 20px; border: 1px solid #000; box-shadow: inset 0 0 0 1px #ffff60, inset 0 0 0 2px #303000; z-index: 2; }
.cursor::after { content: ""; position: absolute; right: -3px; bottom: -3px; width: 4px; height: 4px; background: #202020; }
.chart { width: 307px; height: 406px; margin: 1px 0 0 1px; border: 1px solid #000; background: #e6e6e6; }
.ct { font-size: 20px; }
.cs { font-size: 13px; }
.ax { font-size: 9px; }
.gridlines path { fill: none; stroke: #000; stroke-width: 1; }
.shine { stroke: #dde8dd; stroke-width: 2.500; stroke-opacity: .7; shape-rendering: auto; stroke-linecap: round; }

.tabrow { height: 16px; display: flex; align-items: stretch; }
.nb { width: 16px; height: 16px; border: 1px solid; border-color: #fff #000 #000 #fff; box-shadow: inset -1px -1px #808080; display: flex; align-items: center; justify-content: center; flex: none; }
.tab { width: 52px; position: relative; flex: none; display: grid; margin-left: 1px; }
.tab svg, .tab span { grid-area: 1 / 1; }
.tab span { font-weight: bold; font-size: 12px; z-index: 1; text-align: center; line-height: 16px; padding-right: 1px; }
.tabline { flex: 1; border-top: 1px solid #000; border-right: 1px solid #000; }
.split { width: 5px; border: 1px solid; border-color: #fff #000 #000 #fff; }
.hthumb { width: 145px; border: 1px solid; border-color: #fff #000 #000 #fff; background: #c0c0c0; }
.htrack { width: 175px; background: #d2d2d2; }
.endcap { width: 3px; background: #000; }
.vscroll { width: 16px; border-top: 4px solid #000; display: flex; flex-direction: column; background: #c0c0c0; }
.vb { width: 16px; height: 16px; border: 1px solid; border-color: #fff #000 #000 #fff; box-shadow: inset -1px -1px #808080; display: flex; align-items: center; justify-content: center; flex: none; }
.vthumb { height: 263px; border: 1px solid; border-color: #fff #000 #000 #fff; }
.vtrack { flex: 1; background: #d2d2d2; }
.corner { height: 16px; }

.status { height: 23px; border-top: 1px solid #fff; padding: 3px 3px 3px 5px; margin-top: 0; display: flex; gap: 4px; }
.status span { border: 1px solid; border-color: #808080 #fff #fff #808080; display: flex; align-items: center; justify-content: center; height: 17px; }
.status .s1 { width: 212px; justify-content: flex-start; }
.status .s2 { width: 248px; justify-content: flex-start; }
.status .s3 { width: 47px; }
.status .s4 { width: 41px; }
.status .s5 { width: 31px; }
.status .s6 { width: 18px; }
.status .s7 { flex: 1; }

/* Floating navigator window */
.navigator { position: absolute; left: 29px; top: 401px; width: 255px; height: 244px; background: #c0c0c0; border: 1px solid; border-color: #c0c0c0 #000 #000 #c0c0c0; box-shadow: inset 1px 1px #fff, inset -1px -1px #808080; padding: 2px; z-index: 5; }
.nav-title { height: 16px; background: linear-gradient(90deg, #000080 40%, #000010); color: #fff; display: flex; align-items: center; justify-content: space-between; padding: 0 2px; }
.nav-title b { width: 12px; height: 12px; background: #c0c0c0; border: 1px solid; border-color: #fff #808080 #808080 #fff; display: flex; align-items: center; justify-content: center; }
.nav-tools { display: flex; height: 58px; }
.nav-fields { width: 129px; padding: 7px 0 0 4px; display: grid; grid-template-columns: 56px 59px; grid-auto-rows: 22px; letter-spacing: -.15px; }
.nav-fields label { line-height: 17px; }
.spin { height: 20px; display: flex; align-items: center; padding: 1px 1px 1px 1px; }
.spin span { flex: 1; }
.ud { width: 15px; display: flex; flex-direction: column; }
.ud i { height: 8px; background: #c0c0c0; border: 1px solid; border-color: #fff #000 #000 #fff; display: flex; align-items: center; justify-content: center; }
.ud i::before { content: ""; border: 2px solid transparent; border-bottom-color: #000; border-top: 0; }
.ud i.down::before { border: 2px solid transparent; border-top-color: #000; border-bottom: 0; }
.nav-icons { display: grid; grid-template-columns: repeat(4, 23px); grid-auto-rows: 22px; padding-top: 4px; }
.nav-icons .cell { height: 22px; }
.what { color: #000080; font: bold 14px "Liberation Sans", sans-serif; }
.tree { width: 241px; height: 135px; margin-left: 4px; padding: 0 2px; letter-spacing: -.15px; }
.node { height: 15px; display: flex; align-items: center; }
.node b { width: 9px; height: 9px; margin-left: 1px; }
.node b.plus { border: 1px solid #000; background: linear-gradient(#000, #000) center / 5px 1px no-repeat, linear-gradient(#000, #000) center / 1px 5px no-repeat; }
.node i { width: 28px; padding-left: 2px; display: flex; justify-content: center; }
.nav-combo { width: 241px; margin: 4px 0 0 4px; }
```
